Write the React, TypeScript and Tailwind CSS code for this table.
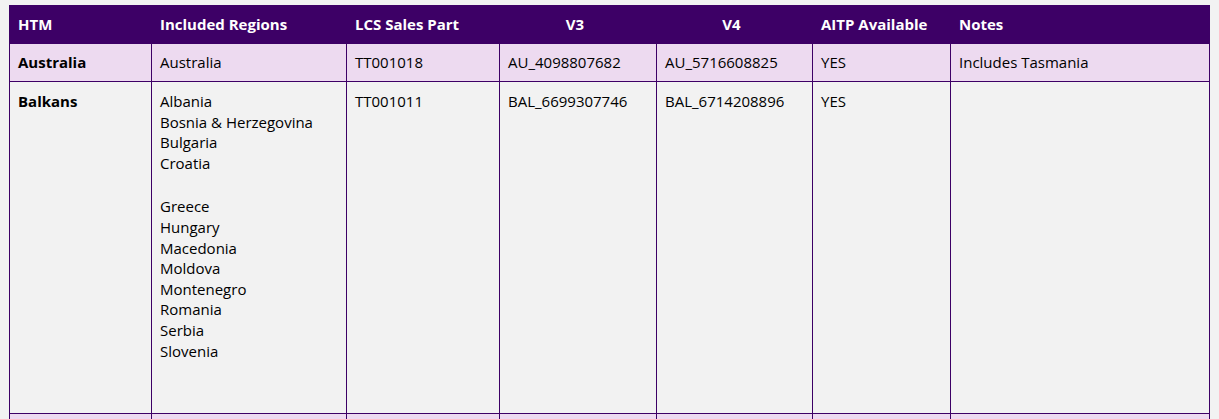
import React from "react";

const font = { fontFamily: '"Open Sans", "Noto Sans", sans-serif' };

export default function App() {
  const regions1 = ["Albania", "Bosnia & Herzegovina", "Bulgaria", "Croatia"];
  const regions2 = ["Greece", "Hungary", "Macedonia", "Moldova", "Montenegro", "Romania", "Serbia", "Slovenia"];
  const td = "border border-[#3d0066] px-[8px] text-[15px] text-black";
  const tdTop = td + " align-top pt-[9px] leading-[20.6px]";
  const tdMid = td + " align-middle";
  const th = "bg-[#3d0066] text-white font-bold text-[15px] px-[8px] h-[38px] border border-[#3d0066]";
  return (
    <div className="min-h-[419px] bg-[#f2f2f2] pt-[5px] pl-[9px]" style={font}>
      <table className="w-[1200px] table-fixed border-collapse">
        <colgroup>
          <col className="w-[142px]" />
          <col className="w-[195px]" />
          <col className="w-[153px]" />
          <col className="w-[157px]" />
          <col className="w-[156px]" />
          <col className="w-[138px]" />
          <col className="w-[259px]" />
        </colgroup>
        <thead>
          <tr>
            <th className={th + " text-left"}>HTM</th>
            <th className={th + " text-left"}>Included Regions</th>
            <th className={th + " text-left"}>LCS Sales Part</th>
            <th className={th + " text-center pr-[14px]"}>V3</th>
            <th className={th + " text-center pr-[14px]"}>V4</th>
            <th className={th + " text-left"}>AITP Available</th>
            <th className={th + " text-left"}>Notes</th>
          </tr>
        </thead>
        <tbody>
          <tr className="bg-[#eddaf0] h-[38px]">
            <td className={tdMid + " font-bold"}>Australia</td>
            <td className={tdMid}>Australia</td>
            <td className={tdMid}>TT001018</td>
            <td className={tdMid}>AU_4098807682</td>
            <td className={tdMid}>AU_5716608825</td>
            <td className={tdMid}>YES</td>
            <td className={tdMid}>Includes Tasmania</td>
          </tr>
          <tr className="bg-[#f2f2f2] h-[332px]">
            <td className={tdTop + " font-bold"}>Balkans</td>
            <td className={tdTop}>
              {regions1.map((r) => (
                <div key={r}>{r}</div>
              ))}
              <div className="h-[23px]" />
              {regions2.map((r) => (
                <div key={r}>{r}</div>
              ))}
            </td>
            <td className={tdTop}>TT001011</td>
            <td className={tdTop}>BAL_6699307746</td>
            <td className={tdTop}>BAL_6714208896</td>
            <td className={tdTop}>YES</td>
            <td className={tdTop}></td>
          </tr>
          <tr className="bg-[#eddaf0] h-[38px]">
            <td className={td}></td>
            <td className={td}></td>
            <td className={td}></td>
            <td className={td}></td>
            <td className={td}></td>
            <td className={td}></td>
            <td className={td}></td>
          </tr>
        </tbody>
      </table>
    </div>
  );
}
